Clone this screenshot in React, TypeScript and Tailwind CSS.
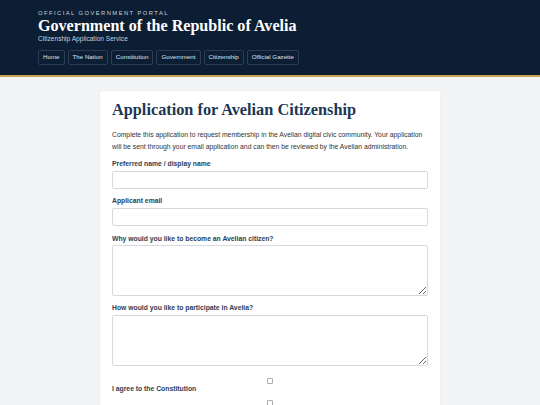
import React from 'react';

const NAV = ['Home', 'The Nation', 'Constitution', 'Government', 'Citizenship', 'Official Gazette'];

const serif = { fontFamily: '"Liberation Serif", Georgia, serif' };

function Field({ label, area }: { label: string; area?: boolean }) {
  return (
    <div className="mb-[7.3px]">
      <label className="block mb-[2.5px] text-[6.8px] font-bold text-[#2c3e55] leading-[9px]">{label}</label>
      {area ? (
        <textarea className="block w-full h-[51px] border border-[#d6d9dd] rounded-[2px] resize-y" />
      ) : (
        <input className="block w-full h-[18.5px] border border-[#d6d9dd] rounded-[2px]" />
      )}
    </div>
  );
}

function Check({ label, top }: { label: string; top: string }) {
  return (
    <label className={`block ${top} text-[6.8px] font-bold text-[#2c3e55] leading-[8px]`}>
      <input
        type="checkbox"
        className="block mx-auto w-[6px] h-[6px] appearance-none border border-[#a9adb3] rounded-[1px] bg-white mb-[1px]"
      />
      {label}
    </label>
  );
}

export default function App() {
  return (
    <div className="min-h-[405px] bg-[#f3f4f6] font-['Liberation_Sans',Arial,sans-serif]">
      <header className="bg-[#0c1e33] border-b-[2.5px] border-[#c4a54f] px-[38px] pt-[10px] pb-[10px]">
        <div className="text-[5.8px] tracking-[1.45px] text-[#c9d1dc] leading-[7px]">OFFICIAL GOVERNMENT PORTAL</div>
        <h1 className="text-[16.1px] font-bold text-white leading-[18px]" style={serif}>
          Government of the Republic of Avelia
        </h1>
        <div className="text-[6.6px] text-[#c2cede] leading-[8px]">Citizenship Application Service</div>
        <nav className="flex gap-[3px] mt-[6.5px]">
          {NAV.map((n) => (
            <span key={n} className="border border-[#2b3c54] rounded-[2px] px-[4px] h-[15px] flex items-center text-[6.2px] text-[#dfe5ec]">
              {n}
            </span>
          ))}
        </nav>
      </header>
      <main className="pt-[14px] flex justify-center">
        <div className="w-[340px] bg-white rounded-[2px] shadow-[0_0_2px_rgba(0,0,0,0.08)] px-[12px] pt-[9px] pb-[20px]">
          <h2 className="text-[16.3px] font-bold text-[#1d3654] leading-[20px]" style={serif}>
            Application for Avelian Citizenship
          </h2>
          <p className="text-[6.8px] text-[#333] leading-[12px] mt-[9px] mb-[6.5px]">
            Complete this application to request membership in the Avelian digital civic community. Your application will be sent through your email application and can then be reviewed by the Avelian administration.
          </p>
          <Field label="Preferred name / display name" />
          <Field label="Applicant email" />
          <Field label="Why would you like to become an Avelian citizen?" area />
          <Field label="How would you like to participate in Avelia?" area />
          <Check label="I agree to the Constitution" top="pt-[5px]" />
          <Check label="I confirm that the information above is accurate" top="pt-[7px]" />
        </div>
      </main>
    </div>
  );
}
